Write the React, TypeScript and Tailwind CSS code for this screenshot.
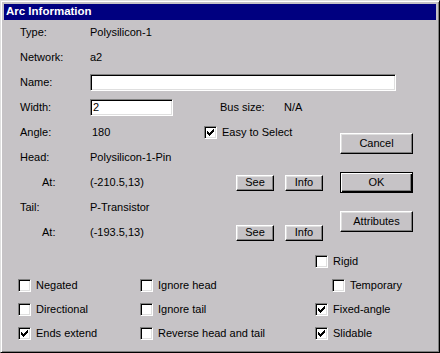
import type { JSX, ReactNode } from "react";

const font = { fontFamily: '"Liberation Sans", Arial, sans-serif' };

// pixel check like the classic 7x7 glyph
const checkCols = [2, 3, 4, 3, 2, 1, 0];

const Check = (): JSX.Element => (
  <svg width="7" height="7" viewBox="0 0 7 7" className="block" shapeRendering="crispEdges">
    {checkCols.map((y, x) => (
      <rect key={x} x={x} y={y} width="1" height="3" fill="#000" />
    ))}
  </svg>
);

const Box = ({ checked }: { checked?: boolean }): JSX.Element => (
  <span className="flex h-[13px] w-[13px] shrink-0 items-center justify-center border border-t-[#808080] border-l-[#808080] border-r-white border-b-white bg-white shadow-[inset_1px_1px_0_#000,inset_-1px_-1px_0_#dfdfdf]">
    {checked && <Check />}
  </span>
);

const CheckItem = ({
  label,
  checked,
  className = "",
}: {
  label: string;
  checked?: boolean;
  className?: string;
}): JSX.Element => (
  <div className={`flex items-center gap-[5px] ${className}`}>
    <Box checked={checked} />
    <span>{label}</span>
  </div>
);

const Button = ({
  children,
  className = "",
  isDefault,
}: {
  children: ReactNode;
  className?: string;
  isDefault?: boolean;
}): JSX.Element => (
  <div
    className={`flex items-center justify-center ${
      isDefault
        ? "border border-black shadow-[inset_1px_1px_0_#fff,inset_-1px_-1px_0_#000,inset_-2px_-2px_0_#808080]"
        : "border border-t-white border-l-white border-r-black border-b-black shadow-[inset_-1px_-1px_0_#808080,inset_1px_1px_0_#dfdfdf]"
    } ${className}`}
  >
    {children}
  </div>
);

const Input = ({ value, className = "" }: { value?: string; className?: string }): JSX.Element => (
  <div
    className={`flex h-[17px] items-center border border-t-[#808080] border-l-[#808080] border-r-white border-b-white bg-white pl-[2px] shadow-[inset_1px_1px_0_#000,inset_-1px_-1px_0_#dfdfdf] ${className}`}
  >
    {value}
  </div>
);

const Row = ({ children }: { children: ReactNode }): JSX.Element => (
  <div className="flex h-[25px] items-center pl-[16px]">{children}</div>
);

export default function App(): JSX.Element {
  return (
    <div
      style={font}
      className="h-[353px] w-[440px] border border-t-[#dfdfdf] border-l-[#dfdfdf] border-r-black border-b-black bg-[#c6c3c6] p-[3px] text-[11px] leading-none text-black shadow-[inset_1px_1px_0_#fff,inset_-1px_-1px_0_#808080]"
    >
      <div className="flex h-[16px] items-center bg-[#000080] pl-[2px] text-[11.5px] font-bold text-white">
        Arc Information
      </div>

      <Row>
        <span className="w-[70px]">Type:</span>
        <span>Polysilicon-1</span>
      </Row>
      <Row>
        <span className="w-[70px]">Network:</span>
        <span>a2</span>
      </Row>
      <Row>
        <span className="w-[70px]">Name:</span>
        <Input className="w-[306px]" />
      </Row>
      <Row>
        <span className="w-[70px]">Width:</span>
        <Input value="2" className="w-[83px]" />
        <span className="ml-[47px] w-[64px]">Bus size:</span>
        <span>N/A</span>
      </Row>

      <div className="flex">
        <div className="w-[336px]">
          <Row>
            <span className="w-[70px]">Angle:</span>
            <span className="w-[114px] pl-[2px]">180</span>
            <CheckItem label="Easy to Select" checked />
          </Row>
          <Row>
            <span className="w-[70px]">Head:</span>
            <span>Polysilicon-1-Pin</span>
          </Row>
          <Row>
            <span className="w-[70px] pl-[22px]">At:</span>
            <span className="w-[146px]">(-210.5,13)</span>
            <Button className="h-[16px] w-[38px]">See</Button>
            <Button className="ml-[11px] h-[16px] w-[38px]">Info</Button>
          </Row>
          <Row>
            <span className="w-[70px]">Tail:</span>
            <span>P-Transistor</span>
          </Row>
          <Row>
            <span className="w-[70px] pl-[22px]">At:</span>
            <span className="w-[146px]">(-193.5,13)</span>
            <Button className="h-[16px] w-[38px]">See</Button>
            <Button className="ml-[11px] h-[16px] w-[38px]">Info</Button>
          </Row>
        </div>
        <div className="flex flex-col gap-[18px] pt-[13px]">
          <Button className="h-[21px] w-[73px]">Cancel</Button>
          <Button className="h-[21px] w-[73px]" isDefault>
            OK
          </Button>
          <Button className="h-[21px] w-[73px]">Attributes</Button>
        </div>
      </div>

      <div className="grid grid-cols-[122px_175px_1fr] pl-[14px] pt-[4px]">
        <div className="h-[24px]" />
        <div className="h-[24px]" />
        <CheckItem label="Rigid" className="h-[24px]" />

        <CheckItem label="Negated" className="h-[24px]" />
        <CheckItem label="Ignore head" className="h-[24px]" />
        <CheckItem label="Temporary" className="h-[24px] pl-[17px]" />

        <CheckItem label="Directional" className="h-[24px]" />
        <CheckItem label="Ignore tail" className="h-[24px]" />
        <CheckItem label="Fixed-angle" checked className="h-[24px]" />

        <CheckItem label="Ends extend" checked className="h-[24px]" />
        <CheckItem label="Reverse head and tail" className="h-[24px]" />
        <CheckItem label="Slidable" checked className="h-[24px]" />
      </div>
    </div>
  );
}
